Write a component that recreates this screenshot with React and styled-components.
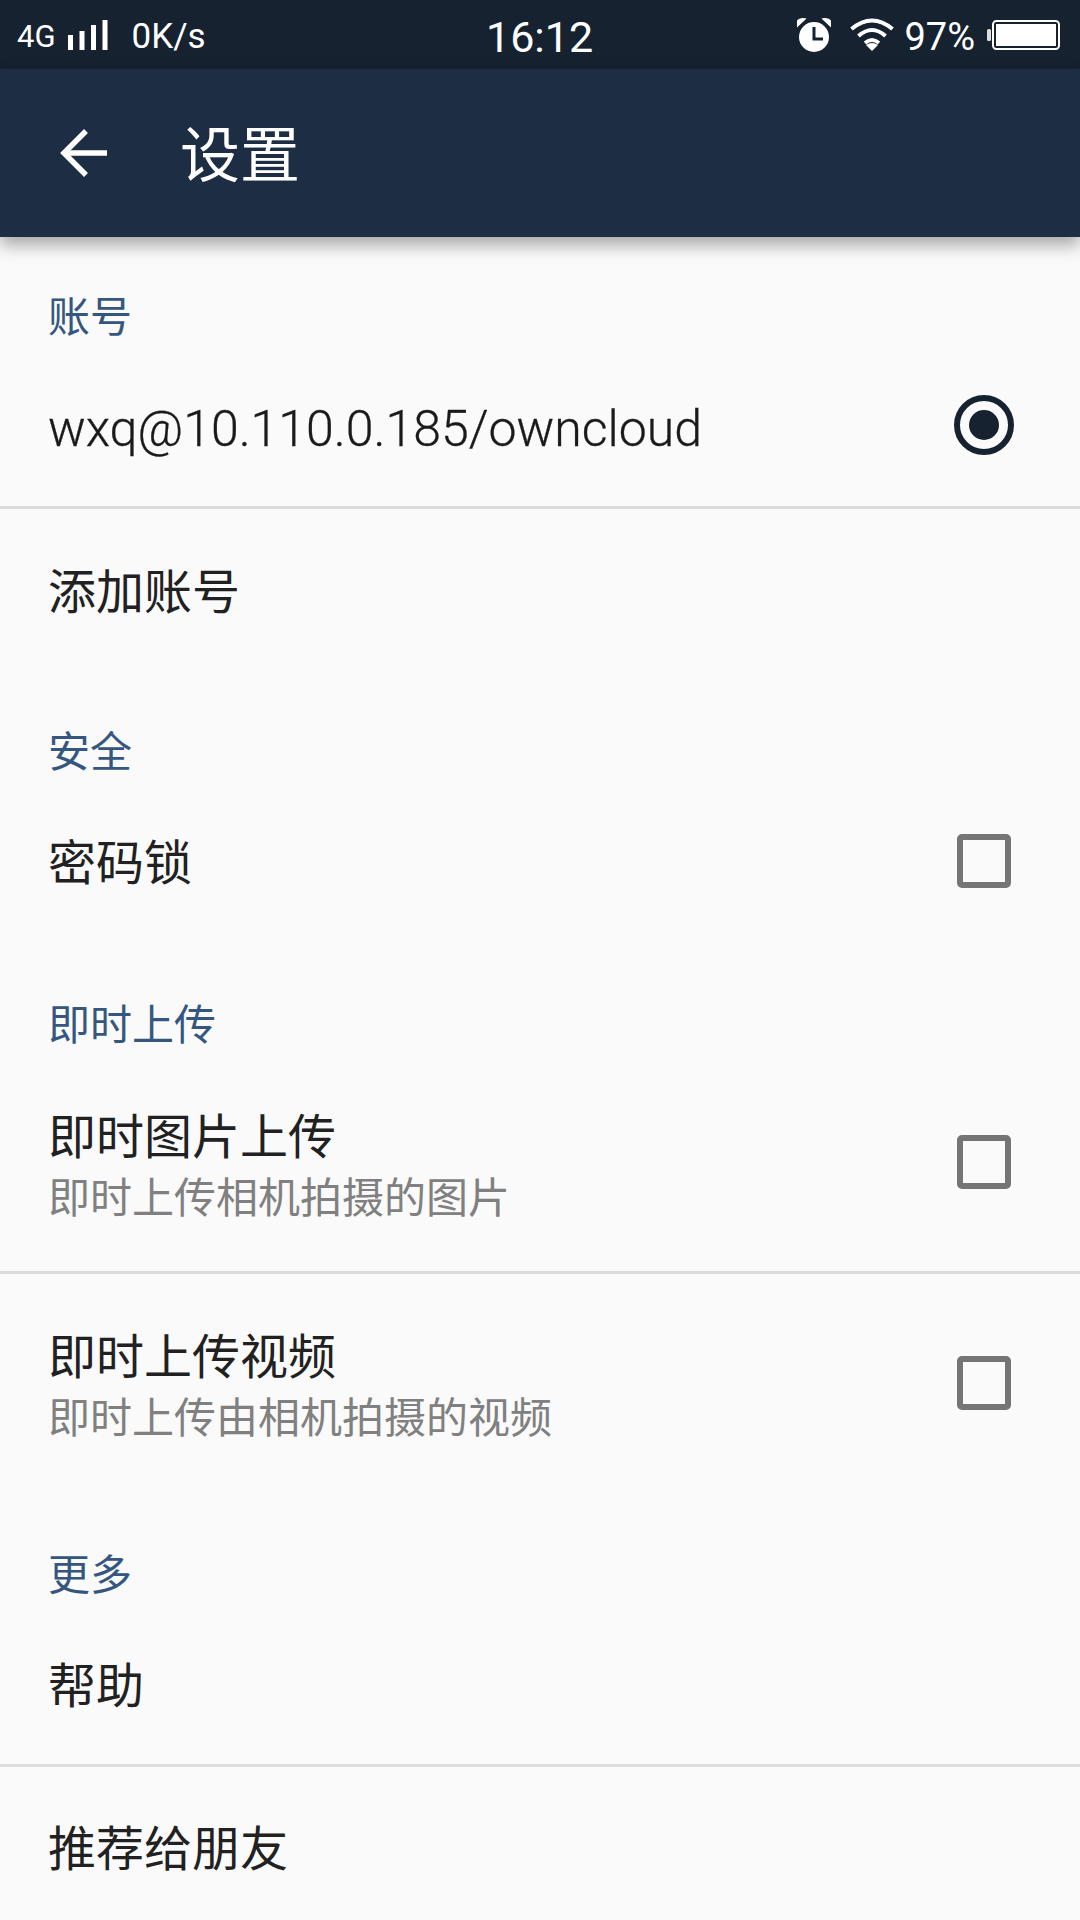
import React from "react";
import styled, { createGlobalStyle } from "styled-components";

const Global = createGlobalStyle`
  html, body { margin: 0; padding: 0; background: #fafafa; }
  * { box-sizing: border-box; }
`;
const CJK = `Roboto, "Noto Sans CJK SC", sans-serif`;

const Page = styled.div`
  width: 1080px; height: 1920px; overflow: hidden; background: #fafafa;
  font-family: ${CJK}; color: #212121; display: flex; flex-direction: column;
`;
const StatusBar = styled.div`
  height: 69px; flex: none; background: #162230; color: #fff; display: flex; align-items: center;
  justify-content: space-between; padding: 0 20px 0 17px; position: relative;
`;
const StatusGroup = styled.div`
  display: flex; align-items: center;
`;
const Slot = styled.span`
  display: flex; margin-left: ${p => p.$ml || 0}px;
`;
const NetText = styled.span`
  font-size: ${p => p.$size || 35}px; line-height: 1; font-family: Roboto, sans-serif;
  margin-left: ${p => p.$ml || 0}px; padding-top: 4px;
`;
const Clock = styled.span`
  position: absolute; left: 486px; top: 12px; font-size: 43px; line-height: 50px; font-family: Roboto, sans-serif;
`;
const Toolbar = styled.header`
  height: 168px; flex: none; background: #1d2d44; color: #fff; display: flex; align-items: center;
  padding: 0 0 0 60px; gap: 72px; box-shadow: 0 8px 16px rgba(0,0,0,.34); position: relative; z-index: 1;
`;
const Title = styled.h1`
  margin: 0; font-size: 60px; font-weight: 400; line-height: 1; padding-top: 8px;
`;
const Section = styled.div`
  flex: none; height: ${p => p.$h}px; display: flex; align-items: flex-end; padding: 0 48px;
  font-size: 42px; line-height: 52px; color: #35577f;
`;
const Row = styled.div`
  flex: none; height: ${p => p.$h}px; display: flex; align-items: center; justify-content: space-between;
  padding: 0 48px; border-bottom: ${p => p.$divider ? "3px solid #dcdcdc" : "none"};
`;
const Labels = styled.div`
  display: flex; flex-direction: column; padding-top: ${p => p.$shift || 0}px;
`;
const RowTitle = styled.div`
  font-size: 48px; line-height: 60px; color: #212121;
`;
const AddressTitle = styled(RowTitle)`
  font-size: 50px; font-weight: 300; color: #1a1a1a; -webkit-text-stroke: 0.3px #1a1a1a;
`;
const Summary = styled.div`
  font-size: 42px; line-height: 61px; color: #808080;
`;
const Control = styled.div`
  width: 60px; height: 60px; margin-right: 18px; display: flex; align-items: center; justify-content: center;
`;
const Check = styled.div`
  width: 54px; height: 54px; border: 6px solid #757575; border-radius: 5px;
`;
const Radio = styled.div`
  width: 60px; height: 60px; border: 6px solid #162230; border-radius: 50%; display: flex; align-items: center; justify-content: center;
  &::after { content: ""; width: 30px; height: 30px; border-radius: 50%; background: #162230; }
`;

const Signal = () => (
  <svg width="40" height="30" viewBox="0 0 40 30" fill="#fff">
    <rect x="0" y="15" width="5" height="15" /><rect x="11.5" y="11" width="5" height="19" />
    <rect x="23" y="5" width="5" height="25" /><rect x="34.5" y="0" width="5" height="30" />
  </svg>
);
const Alarm = () => (
  <svg width="34" height="34" viewBox="0 0 34 34">
    <circle cx="17" cy="19" r="15" fill="#fff" />
    <path d="M0.5 8 L8 1 Q2.5 0 0.5 3Z M33.5 8 L26 1 Q31.5 0 33.5 3Z" fill="#fff" stroke="#fff" strokeWidth="1.5" />
    <path d="M17 9 V21 H26" fill="none" stroke="#162230" strokeWidth="3" />
  </svg>
);
const Wifi = () => (
  <svg width="44" height="34" viewBox="0 0 44 34" fill="none" stroke="#fff" strokeWidth="4">
    <path d="M1.5 11 Q22 -6 42.5 11" /><path d="M8.5 18 Q22 6 35.5 18" /><path d="M15 25 Q22 19 29 25" />
    <path d="M16 27 L22 33 L28 27 Q22 23 16 27Z" fill="#fff" stroke="none" />
  </svg>
);
const Battery = () => (
  <svg width="73" height="30" viewBox="0 0 73 30">
    <rect x="0" y="9" width="4" height="12" rx="1.5" fill="#ddd" />
    <rect x="6" y="1" width="66" height="28" rx="3.5" fill="none" stroke="#fff" strokeWidth="2" />
    <rect x="9" y="4" width="60" height="22" fill="#fff" />
  </svg>
);
const Back = () => (
  <svg width="48" height="48" viewBox="0 0 48 48" fill="none" stroke="#fff" strokeWidth="5.5">
    <path d="M47 24 H4" /><path d="M26 2 L4 24 L26 46" />
  </svg>
);

export default function App() {
  return (
    <Page>
      <Global />
      <StatusBar>
        <StatusGroup>
          <NetText $size={31}>4G</NetText>
          <Slot $ml={12}><Signal /></Slot>
          <NetText $ml={24}>0K/s</NetText>
        </StatusGroup>
        <Clock>16:12</Clock>
        <StatusGroup>
          <Slot><Alarm /></Slot>
          <Slot $ml={19}><Wifi /></Slot>
          <NetText $size={38} $ml={10}>97%</NetText>
          <Slot $ml={12}><Battery /></Slot>
        </StatusGroup>
      </StatusBar>
      <Toolbar>
        <Back />
        <Title>设置</Title>
      </Toolbar>
      <Section $h={107}>账号</Section>
      <Row $h={165} $divider>
        <Labels $shift={8}><AddressTitle>wxq@10.110.0.185/owncloud</AddressTitle></Labels>
        <Control><Radio /></Control>
      </Row>
      <Row $h={167}><Labels><RowTitle>添加账号</RowTitle></Labels></Row>
      <Section $h={103}>安全</Section>
      <Row $h={164}>
        <Labels $shift={6}><RowTitle>密码锁</RowTitle></Labels>
        <Control><Check /></Control>
      </Row>
      <Section $h={109}>即时上传</Section>
      <Row $h={222} $divider>
        <Labels $shift={13}>
          <RowTitle>即时图片上传</RowTitle>
          <Summary>即时上传相机拍摄的图片</Summary>
        </Labels>
        <Control><Check /></Control>
      </Row>
      <Row $h={218}>
        <Labels $shift={11}>
          <RowTitle>即时上传视频</RowTitle>
          <Summary>即时上传由相机拍摄的视频</Summary>
        </Labels>
        <Control><Check /></Control>
      </Row>
      <Section $h={110}>更多</Section>
      <Row $h={165} $divider><Labels $shift={8}><RowTitle>帮助</RowTitle></Labels></Row>
      <Row $h={164}><Labels $shift={2}><RowTitle>推荐给朋友</RowTitle></Labels></Row>
    </Page>
  );
}
